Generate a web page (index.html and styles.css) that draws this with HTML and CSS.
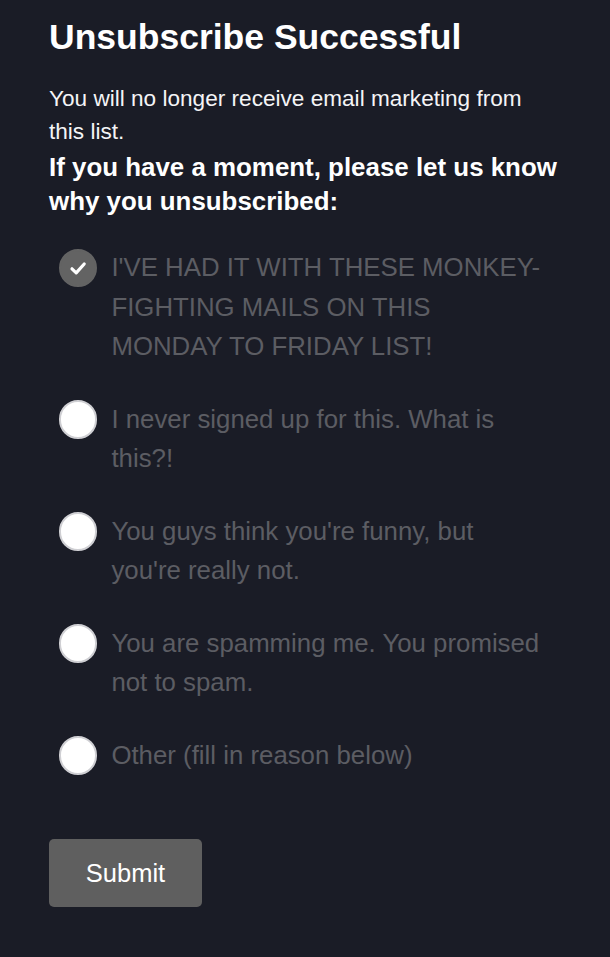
FILE: index.html
```html
<!DOCTYPE html>
<html lang="en">
<head>
<meta charset="utf-8">
<title>Unsubscribe Successful</title>
<link rel="stylesheet" href="styles.css">
</head>
<body>
<main class="page">
  <h1 class="title">Unsubscribe Successful</h1>
  <p class="lead">You will no longer receive email marketing from this list.</p>
  <p class="question">If you have a moment, please let us know why you unsubscribed:</p>
  <form class="form">
    <ul class="options">
      <li class="option">
        <span class="radio radio--checked">
          <svg viewBox="0 0 38 38" width="38" height="38" aria-hidden="true"><path d="M13 19.8 L17.2 23.8 L25.2 15" fill="none" stroke="#fff" stroke-width="3.2" stroke-linecap="round" stroke-linejoin="round"/></svg>
        </span>
        <span class="label">I'VE HAD IT WITH THESE MONKEY-FIGHTING MAILS ON THIS MONDAY TO FRIDAY LIST!</span>
      </li>
      <li class="option">
        <span class="radio"></span>
        <span class="label">I never signed up for this. What is this?!</span>
      </li>
      <li class="option">
        <span class="radio"></span>
        <span class="label">You guys think you're funny, but you're really not.</span>
      </li>
      <li class="option">
        <span class="radio"></span>
        <span class="label">You are spamming me. You promised not to spam.</span>
      </li>
      <li class="option">
        <span class="radio"></span>
        <span class="label">Other (fill in reason below)</span>
      </li>
    </ul>
    <button type="button" class="submit">Submit</button>
  </form>
</main>
</body>
</html>
```

FILE: styles.css
```css
html, body {
  margin: 0;
  padding: 0;
  background: #1a1c26;
}

body {
  font-family: "Liberation Sans", Arial, Helvetica, sans-serif;
  color: #ffffff;
}

.page {
  padding: 15.7px 49px 0;
}

.title {
  margin: 0 0 24.5px;
  font-size: 35.5px;
  line-height: 42px;
  font-weight: 700;
  color: #ffffff;
}

.lead {
  margin: 0;
  font-size: 22.6px;
  line-height: 33.3px;
  color: #f4f4f6;
}

.question {
  margin: 0.9px 0 30.6px;
  font-size: 25.9px;
  line-height: 34px;
  font-weight: 700;
  color: #ffffff;
}

.form {
  margin: 0;
}

.options {
  list-style: none;
  margin: 0 0 63.6px;
  padding: 0 0 0 10px;
  display: flex;
  flex-direction: column;
  gap: 33.2px;
}

.option {
  display: flex;
  align-items: flex-start;
  gap: 14px;
}

.radio {
  flex: 0 0 auto;
  box-sizing: border-box;
  width: 38.4px;
  height: 38.4px;
  margin-top: 0.5px;
  border-radius: 50%;
  background: #ffffff;
  border: 2px solid #cfcfd3;
  display: flex;
  align-items: center;
  justify-content: center;
}

.radio--checked {
  background: #636363;
  border-color: #636363;
}

.radio--checked svg {
  display: block;
  flex: 0 0 auto;
}

.label {
  flex: 1 1 auto;
  padding-right: 13px;
  font-size: 25.8px;
  line-height: 39.4px;
  color: #5c5d63;
}

.submit {
  display: block;
  box-sizing: border-box;
  width: 153px;
  height: 68px;
  padding: 0;
  border: none;
  border-radius: 5px;
  background: #5f5f5f;
  color: #ffffff;
  font-family: "Liberation Sans", Arial, Helvetica, sans-serif;
  font-size: 25.5px;
  line-height: 68px;
  text-align: center;
  cursor: pointer;
}
```
